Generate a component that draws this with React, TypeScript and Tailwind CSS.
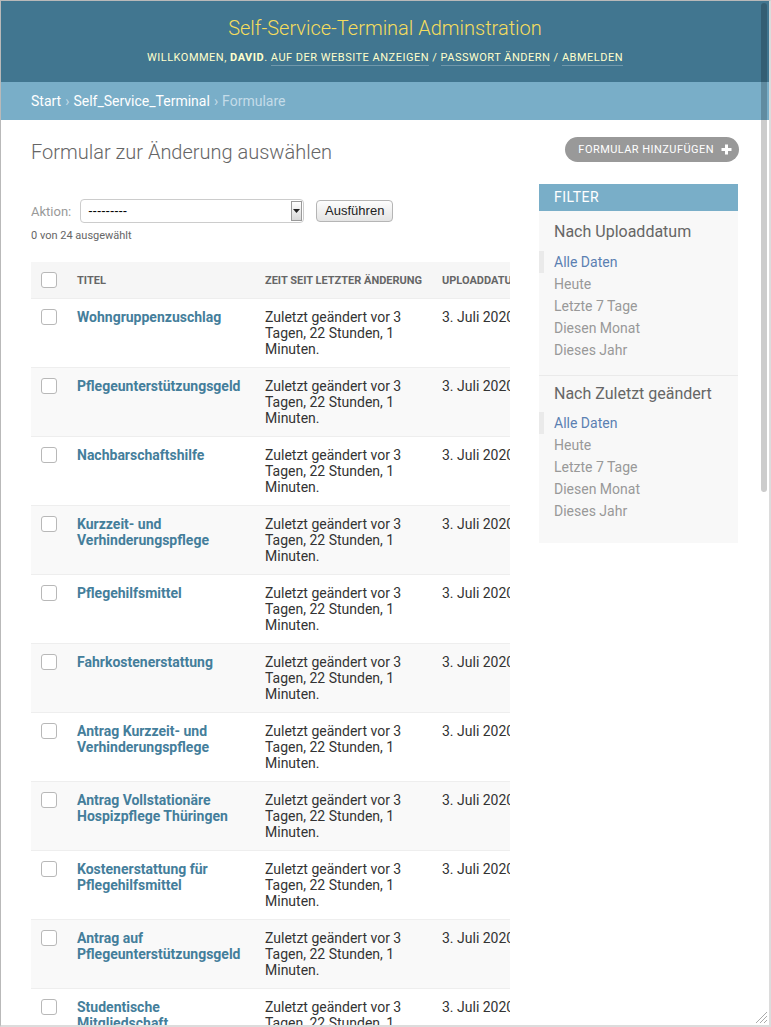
const rows = [
  "Wohngruppenzuschlag",
  "Pflegeunterstützungsgeld",
  "Nachbarschaftshilfe",
  "Kurzzeit- und Verhinderungspflege",
  "Pflegehilfsmittel",
  "Fahrkostenerstattung",
  "Antrag Kurzzeit- und Verhinderungspflege",
  "Antrag Vollstationäre Hospizpflege Thüringen",
  "Kostenerstattung für Pflegehilfsmittel",
  "Antrag auf Pflegeunterstützungsgeld",
  "Studentische Mitgliedschaft",
  "Haushaltshilfe",
];

const filterOptions = ["Alle Daten", "Heute", "Letzte 7 Tage", "Diesen Monat", "Dieses Jahr"];

function Checkbox() {
  return <div className="w-[16px] h-[16px] rounded-[3px] border border-[#b8b8b8] bg-white" />;
}

function FilterSection({ title, last }: { title: string; last?: boolean }) {
  return (
    <div className={last ? "pt-[8px] pb-[21px]" : "pt-[11px] pb-[14px] border-b border-[#eaeaea]"}>
      <h3 className="px-[15px] text-[16px] leading-[20px] text-[#666]">{title}</h3>
      <ul className={last ? "mt-[8px]" : "mt-[9px]"}>
        {filterOptions.map((o, i) => (
          <li
            key={o}
            className={
              i === 0
                ? "border-l-[5px] border-[#eaeaea] pl-[10px] leading-[22px] text-[14px] text-[#5b80b2]"
                : "pl-[15px] leading-[22px] text-[14px] text-[#999]"
            }
          >
            {o}
          </li>
        ))}
      </ul>
    </div>
  );
}

export default function App() {
  return (
    <div className="relative w-[771px] h-[1027px] overflow-hidden bg-white border-l border-t border-[#b9b9b9] border-r-2 border-b-2 border-r-[#dcdcdc] border-b-[#dcdcdc] font-['Roboto',sans-serif]">
      {/* header */}
      <div className="h-[81px] bg-[#417690] flex flex-col items-center pt-[14px]">
        <h1 className="text-[20px] leading-[26px] font-light text-[#f5dd5d]">Self-Service-Terminal Adminstration</h1>
        <div className="mt-[9px] text-[11px] leading-[16px] tracking-[0.5px] uppercase text-[#ffffcc]">
          Willkommen, <strong className="font-bold">David</strong>.{" "}
          <span className="border-b border-white/25 pb-[1px]">Auf der Website anzeigen</span> /{" "}
          <span className="border-b border-white/25 pb-[1px]">Passwort ändern</span> /{" "}
          <span className="border-b border-white/25 pb-[1px]">Abmelden</span>
        </div>
      </div>

      {/* breadcrumbs */}
      <div className="h-[38px] bg-[#79aec8] flex items-center px-[30px] text-[14px] text-[#c4dce8]">
        <span className="text-white">Start</span>
        <span className="mx-[4px]">›</span>
        <span className="text-white">Self_Service_Terminal</span>
        <span className="mx-[4px]">›</span>
        <span>Formulare</span>
      </div>

      {/* content */}
      <div className="px-[30px] pt-[20px]">
        <div className="flex items-start justify-between">
          <h1 className="text-[20px] leading-[24px] font-light text-[#666]">Formular zur Änderung auswählen</h1>
          <div className="mt-[-3px] h-[25px] rounded-full bg-[#999] flex items-center gap-[7px] pl-[13px] pr-[7px] pt-[1px] text-[11px] tracking-[0.45px] uppercase text-white">
            Formular hinzufügen
            <svg width="11" height="11" viewBox="0 0 11 11" className="mt-[-1px]">
              <path d="M5.5 0.5v10M0.5 5.5h10" stroke="white" strokeWidth="3" />
            </svg>
          </div>
        </div>

        <div className="mt-[20px] flex items-start">
          {/* changelist */}
          <div className="w-[479px] shrink-0 mr-[29px] overflow-hidden">
            <div className="pt-[15px] flex items-center">
              <span className="text-[13px] text-[#999] pt-[1px]">Aktion:</span>
              <div className="ml-[9px] w-[224px] h-[24px] rounded-[4px] border border-[#ccc] flex items-center justify-between pl-[7px] pr-[1px] font-['Liberation_Sans',sans-serif] text-[13px] text-black">
                <span>---------</span>
                <div className="w-[11px] h-[20px] border border-[#9a9a9a] bg-gradient-to-b from-white to-[#d8d8d8] flex items-center justify-center">
                  <svg width="7" height="4" viewBox="0 0 7 4">
                    <path d="M0 0h7L3.5 4z" fill="#222" />
                  </svg>
                </div>
              </div>
              <div className="ml-[12px] h-[22px] w-[77px] rounded-[4px] border border-[#b5b5b5] bg-gradient-to-b from-[#fdfdfd] to-[#e4e4e4] flex items-center justify-center font-['Liberation_Sans',sans-serif] text-[13px] text-[#222]">
                Ausführen
              </div>
            </div>
            <div className="mt-[6px] text-[11px] leading-[14px] text-[#666]">0 von 24 ausgewählt</div>

            <table className="mt-[19px] w-[640px] table-fixed border-collapse">
              <colgroup>
                <col className="w-[36px]" />
                <col className="w-[188px]" />
                <col className="w-[177px]" />
                <col className="w-[239px]" />
              </colgroup>
              <thead>
                <tr className="h-[36px] bg-[#f6f6f6] border-b border-[#eee]">
                  <th className="pl-[10px] align-middle">
                    <Checkbox />
                  </th>
                  <th className="px-[10px] pt-[2px] text-left text-[11px] font-bold uppercase text-[#666]">Titel</th>
                  <th className="px-[10px] pt-[2px] text-left text-[11px] font-bold uppercase text-[#666] whitespace-nowrap">
                    Zeit seit letzter Änderung
                  </th>
                  <th className="px-[10px] pt-[2px] text-left text-[11px] font-bold uppercase text-[#666]">Uploaddatum</th>
                </tr>
              </thead>
              <tbody>
                {rows.map((r, i) => (
                  <tr key={r} className={(i % 2 ? "bg-[#f9f9f9]" : "bg-white") + " border-b border-[#eee]"}>
                    <td className="pl-[10px] pt-[10px] pb-[10px] align-top">
                      <Checkbox />
                    </td>
                    <td className="p-[10px] align-top text-[14px] leading-[16px] font-bold text-[#447e9b]">{r}</td>
                    <td className="p-[10px] align-top text-[14px] leading-[16px] text-[#333]">
                      Zuletzt geändert vor 3 Tagen, 22 Stunden, 1 Minuten.
                    </td>
                    <td className="p-[10px] align-top text-[14px] leading-[16px] text-[#333] whitespace-nowrap">
                      3. Juli 2020, 14:12
                    </td>
                  </tr>
                ))}
              </tbody>
            </table>
          </div>

          {/* filter */}
          <div className="w-[199px] shrink-0 bg-[#f8f8f8]">
            <h2 className="h-[27px] bg-[#79aec8] px-[15px] flex items-center text-[14px] tracking-[0.5px] uppercase text-white">
              Filter
            </h2>
            <FilterSection title="Nach Uploaddatum" />
            <FilterSection title="Nach Zuletzt geändert" last />
          </div>
        </div>
      </div>

      {/* overlay scrollbar */}
      <div className="absolute right-[2px] top-[2px] w-[6px] h-[489px] rounded-full bg-black/20" />
      {/* resize grip */}
      <svg className="absolute right-[1px] bottom-[1px]" width="13" height="13" viewBox="0 0 13 13">
        <path d="M12 1L1 12M12 5L5 12M12 9L9 12" stroke="#aaa" strokeWidth="1" />
      </svg>
    </div>
  );
}
